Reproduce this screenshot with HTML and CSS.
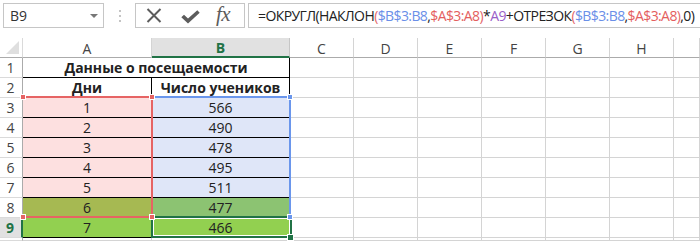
FILE: index.html
```html
<!DOCTYPE html>
<html lang="ru">
<head>
<meta charset="utf-8">
<title>Excel</title>
<link rel="stylesheet" href="styles.css">
</head>
<body>
<div class="app">
  <div class="toolbar">
    <div class="namebox"><span class="nb-text">B9</span><span class="caret"></span></div>
    <div class="dots"><i></i><i></i><i></i></div>
    <div class="fxbox">
      <svg class="ico-x" width="16" height="15" viewBox="0 0 16 15"><path d="M1.5 1 L14.5 14 M14.5 1 L1.5 14" stroke="#5c5c5c" stroke-width="2" fill="none"/></svg>
      <svg class="ico-ok" width="19" height="14" viewBox="0 0 19 14"><path d="M0.3 7.2 L3 4.8 L7 8.6 L16.3 0.3 L18.7 2.7 L7 13.5 Z" fill="#5c5c5c"/></svg>
      <span class="fx">fx</span>
    </div>
    <div class="formula"><span>=ОКРУГЛ(НАКЛОН</span><span class="pr">(</span><span class="rb">$B$3:B8</span>,<span class="rr">$A$3:A8</span><span class="pr">)</span>*<span class="rp">A9</span>+ОТРЕЗОК<span class="pr">(</span><span class="rb">$B$3:B8</span>,<span class="rr">$A$3:A8</span><span class="pr">)</span>,0)</div>
  </div>

  <div class="sheet">
    <div class="grid">
      <div class="corner"><span class="tri"></span></div>
      <div class="ch">A</div><div class="ch ch-sel">B</div><div class="ch">C</div><div class="ch">D</div><div class="ch">E</div><div class="ch">F</div><div class="ch">G</div><div class="ch">H</div><div class="ch"></div>

      <div class="rh">1</div><div class="c t r bold title">Данные о посещаемости</div><div class="c"></div><div class="c"></div><div class="c"></div><div class="c"></div><div class="c"></div><div class="c"></div><div class="c"></div>

      <div class="rh">2</div><div class="c t r bold">Дни</div><div class="c t r bold">Число учеников</div><div class="c"></div><div class="c"></div><div class="c"></div><div class="c"></div><div class="c"></div><div class="c"></div><div class="c"></div>

      <div class="rh">3</div><div class="c t r pink">1</div><div class="c t r blue">566</div><div class="c"></div><div class="c"></div><div class="c"></div><div class="c"></div><div class="c"></div><div class="c"></div><div class="c"></div>

      <div class="rh">4</div><div class="c t r pink">2</div><div class="c t r blue">490</div><div class="c"></div><div class="c"></div><div class="c"></div><div class="c"></div><div class="c"></div><div class="c"></div><div class="c"></div>

      <div class="rh">5</div><div class="c t r pink">3</div><div class="c t r blue">478</div><div class="c"></div><div class="c"></div><div class="c"></div><div class="c"></div><div class="c"></div><div class="c"></div><div class="c"></div>

      <div class="rh">6</div><div class="c t r pink">4</div><div class="c t r blue">495</div><div class="c"></div><div class="c"></div><div class="c"></div><div class="c"></div><div class="c"></div><div class="c"></div><div class="c"></div>

      <div class="rh">7</div><div class="c t r pink">5</div><div class="c t r blue">511</div><div class="c"></div><div class="c"></div><div class="c"></div><div class="c"></div><div class="c"></div><div class="c"></div><div class="c"></div>

      <div class="rh">8</div><div class="c t r olive">6</div><div class="c t r green2">477</div><div class="c"></div><div class="c"></div><div class="c"></div><div class="c"></div><div class="c"></div><div class="c"></div><div class="c"></div>

      <div class="rh rh-sel">9</div><div class="c t r green">7</div><div class="c t r green">466</div><div class="c"></div><div class="c"></div><div class="c"></div><div class="c"></div><div class="c"></div><div class="c"></div><div class="c"></div>

      <div class="rh"></div><div class="c"></div><div class="c"></div><div class="c"></div><div class="c"></div><div class="c"></div><div class="c"></div><div class="c"></div><div class="c"></div><div class="c"></div>
    </div>

    <div class="range-red"></div>
    <div class="range-blue"></div>
    <div class="active-cell"></div>
    <span class="handle h-red h1"></span>
    <span class="handle h-red h2"></span>
    <span class="handle h-red h3"></span>
    <span class="handle h-red h4"></span>
    <span class="handle h-blue h5"></span>
    <span class="handle h-blue h6"></span>
    <span class="fill-handle"></span>
  </div>
</div>
</body>
</html>
```

FILE: styles.css
```css
* { box-sizing: border-box; }
html, body { margin: 0; padding: 0; background: #fff; }
body {
  width: 700px;
  height: 241px;
  overflow: hidden;
  font-family: "Open Sans", "Noto Sans", sans-serif;
  color: #222;
}

.app { width: 700px; }

/* ---------- formula bar ---------- */
.toolbar {
  height: 38px;
  display: flex;
  align-items: flex-start;
  padding: 3px 0 0 3px;
}
.namebox {
  width: 101px;
  height: 25px;
  border: 1px solid #c6c6c6;
  display: flex;
  align-items: center;
  justify-content: space-between;
  padding: 0 5px 0 6px;
  font-size: 14px;
  color: #333;
}
.caret {
  width: 0; height: 0;
  border-left: 4px solid transparent;
  border-right: 4px solid transparent;
  border-top: 4px solid #777;
  margin-top: 1px;
}
.dots {
  width: 31px;
  height: 25px;
  display: flex;
  flex-direction: column;
  align-items: center;
  justify-content: center;
  gap: 3px;
}
.dots i {
  display: block;
  width: 2px; height: 2px;
  background: #c4c4c4;
}
.fxbox {
  width: 110px;
  height: 25px;
  border: 1px solid #c6c6c6;
  display: flex;
  align-items: center;
  padding-left: 10px;
}
.ico-ok { margin-left: 19px; margin-top: 3px; }
.fx {
  margin-left: 16px;
  font-family: "Liberation Serif", "DejaVu Serif", serif;
  font-style: italic;
  font-size: 21px;
  color: #5c5c5c;
  line-height: 1;
  margin-top: -3px;
  letter-spacing: -0.5px;
}
.formula {
  margin-left: 3px;
  flex: 1;
  height: 25px;
  border: 1px solid #c6c6c6;
  border-right: none;
  display: flex;
  align-items: center;
  padding-left: 9px;
  font-size: 14px;
  white-space: nowrap;
  color: #222;
  overflow: hidden;
  letter-spacing: -0.6px;
}
.pr { color: #e4676a; }
.rb { color: #6a8fe8; }
.rr { color: #e45e5e; }
.rp { color: #9a5ec8; }

/* ---------- sheet ---------- */
.sheet { position: relative; }
.grid {
  display: grid;
  grid-template-columns: 23px 129px 138px repeat(6, 64px) 26px;
  grid-template-rows: repeat(10, 20px) 3px;
  font-size: 14px;
  overflow: hidden;
}
.corner, .ch, .rh, .c {
  border-right: 1px solid #d4d4d4;
  border-bottom: 1px solid #d4d4d4;
  display: flex;
  align-items: center;
  justify-content: center;
  white-space: nowrap;
}
.corner { border-bottom-color: #ababab; border-right-color: #dadada; position: relative; }
.tri {
  position: absolute;
  right: 3px; bottom: 3px;
  width: 0; height: 0;
  border-left: 13px solid transparent;
  border-bottom: 13px solid #dfdfdf;
}
.ch {
  color: #444;
  border-bottom-color: #ababab;
  padding-top: 1px;
}
.ch-sel {
  background: #e1e1e1;
  color: #217346;
  font-weight: 700;
  border-bottom: 2px solid #217346;
  border-right-color: #c6c6c6;
}
.rh {
  color: #444;
  border-right-color: #ababab;
  border-bottom-color: #dadada;
  padding-right: 1px;
}
.rh-sel {
  background: #e1e1e1;
  color: #217346;
  font-weight: 700;
  border-right: 2px solid #217346;
}
.c { color: #222; }
.t { border-bottom-color: #000; }
.r { border-right-color: #000; }
.bold { font-weight: 700; }
.title { grid-column: span 2; }

.pink { background: #fde0e0; }
.blue { background: #dfe6f8; }
.olive { background: #a6b952; }
.green2 { background: #8cc372; }
.green { background: #92d050; }

/* ---------- reference highlights (overlays) ---------- */
.range-red {
  position: absolute;
  left: 23px; top: 58px;
  width: 130px; height: 122px;
  border-top: 2px solid #e66464;
  border-right: 2px solid #e66464;
  border-bottom: 2px solid #e66464;
}
.range-blue {
  position: absolute;
  left: 153px; top: 58px;
  width: 138px; height: 122px;
  border-top: 2px solid #6a96ec;
  border-right: 2px solid #6a96ec;
}
.active-cell {
  position: absolute;
  left: 151px; top: 178px;
  width: 141px; height: 22px;
  border: 2px solid #217346;
  box-shadow: inset 0 0 0 1px #fff;
}
.handle {
  position: absolute;
  width: 6px; height: 6px;
  border: 1px solid #fff;
}
.h-red { background: #e66464; }
.h-blue { background: #6a96ec; }
.h1 { left: 20px; top: 56px; }
.h2 { left: 149px; top: 56px; }
.h3 { left: 20px; top: 176px; }
.h4 { left: 149px; top: 176px; }
.h5 { left: 287px; top: 56px; }
.h6 { left: 287px; top: 176px; }
.fill-handle {
  position: absolute;
  left: 287px; top: 196px;
  width: 7px; height: 7px;
  background: #217346;
  border: 1px solid #fff;
}
```
